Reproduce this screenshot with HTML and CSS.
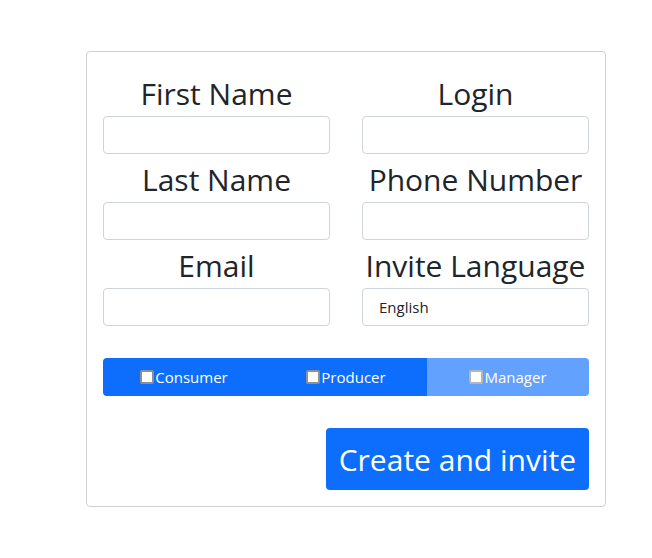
FILE: index.html
```html
<!DOCTYPE html>
<html>
<head>
<meta charset="utf-8">
<link rel="stylesheet" href="styles.css">
</head>
<body>
<div class="page">
  <form class="card">
    <div class="grid">
      <div class="field">
        <label class="lbl">First Name</label>
        <input class="ctl" type="text">
      </div>
      <div class="field">
        <label class="lbl">Login</label>
        <input class="ctl" type="text">
      </div>
      <div class="field">
        <label class="lbl">Last Name</label>
        <input class="ctl" type="text">
      </div>
      <div class="field">
        <label class="lbl">Phone Number</label>
        <input class="ctl" type="text">
      </div>
      <div class="field">
        <label class="lbl">Email</label>
        <input class="ctl" type="text">
      </div>
      <div class="field">
        <label class="lbl">Invite Language</label>
        <div class="ctl sel">English</div>
      </div>
    </div>
    <div class="roles">
      <label class="role"><span class="box"></span>Consumer</label>
      <label class="role"><span class="box"></span>Producer</label>
      <label class="role off"><span class="box"></span>Manager</label>
    </div>
    <div class="actions">
      <button type="button" class="btn">Create and invite</button>
    </div>
  </form>
</div>
</body>
</html>
```
FILE: styles.css
```css
* { box-sizing: border-box; }
body {
  margin: 0;
  font-family: "Open Sans", "Noto Sans", sans-serif;
  color: #212529;
  background: #fff;
}
.page {
  padding: 51px 0 0 86px;
}
.card {
  width: 520px;
  border: 1px solid #d0d0d0;
  border-radius: 4px;
  padding: 16px 16px 16px 16px;
}
.grid {
  display: grid;
  grid-template-columns: 227px 227px;
  column-gap: 32px;
  row-gap: 0;
}
.field {
  display: flex;
  flex-direction: column;
}
.lbl {
  font-size: 30px;
  line-height: 40px;
  text-align: center;
  padding-top: 6px;
  margin-bottom: 2px;
  white-space: nowrap;
}
.ctl {
  height: 38px;
  border: 1px solid #ced4da;
  border-radius: 4px;
  background: #fff;
  font: inherit;
}
.sel {
  font-size: 15px;
  line-height: 36px;
  padding-left: 16px;
  color: #212529;
}
.roles {
  margin-top: 32px;
  display: grid;
  grid-template-columns: 1fr 1fr 1fr;
  height: 38px;
  border-radius: 4px;
  overflow: hidden;
}
.role {
  display: flex;
  align-items: center;
  justify-content: center;
  background: #0d6efd;
  color: #fff;
  font-size: 15px;
}
.role.off {
  background: #62a1fe;
}
.box {
  width: 14px;
  height: 14px;
  border: 2px solid #8f8f8f;
  background: #fff;
  border-radius: 2px;
  margin-right: 1px;
}
.role.off .box { border-color: #b5b5b5; }
.actions {
  margin-top: 32px;
  display: flex;
  justify-content: flex-end;
}
.btn {
  height: 62px;
  padding: 0 13px;
  border: none;
  border-radius: 4px;
  background: #0d6efd;
  color: #fff;
  font-family: inherit;
  font-size: 30px;
}
```
